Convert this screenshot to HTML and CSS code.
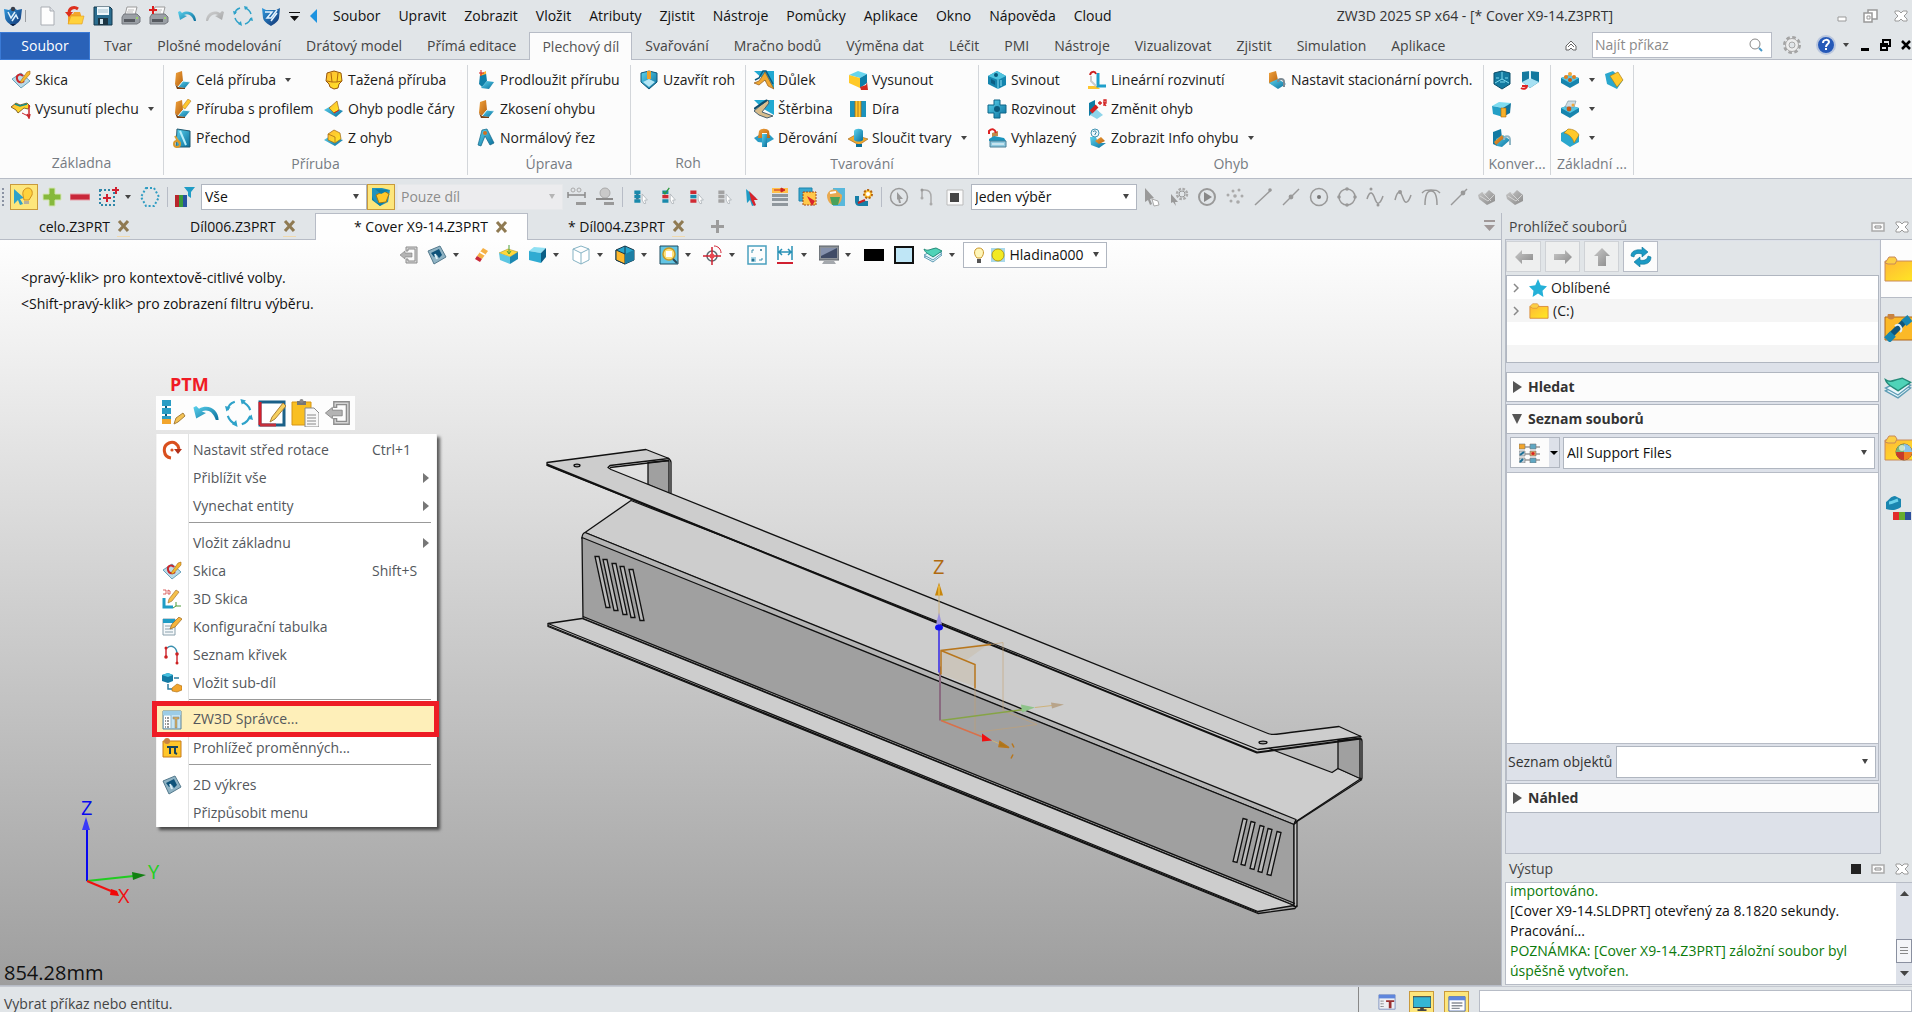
FILE: index.html
```html
<!DOCTYPE html>
<html lang="cs">
<head>
<meta charset="utf-8">
<title>ZW3D 2025 SP x64 - [* Cover X9-14.Z3PRT]</title>
<link rel="stylesheet" href="styles.css">
</head>
<body>
<svg class="sprite" aria-hidden="true">
  <defs>
    <linearGradient id="gb" x1="0" y1="0" x2="1" y2="1"><stop offset="0" stop-color="#5cd3ee"/><stop offset="1" stop-color="#0a6f9c"/></linearGradient>
    <linearGradient id="go" x1="0" y1="0" x2="1" y2="1"><stop offset="0" stop-color="#f0a23c"/><stop offset="1" stop-color="#b8620f"/></linearGradient>
    <linearGradient id="gy" x1="0" y1="0" x2="1" y2="1"><stop offset="0" stop-color="#ffb836"/><stop offset="1" stop-color="#ffea22"/></linearGradient>
    <linearGradient id="gg" x1="0" y1="0" x2="1" y2="1"><stop offset="0" stop-color="#c9c9c9"/><stop offset="1" stop-color="#8a8a8a"/></linearGradient>
    <linearGradient id="gs" x1="0" y1="0" x2="1" y2="1"><stop offset="0" stop-color="#2f9be0"/><stop offset="1" stop-color="#12306e"/></linearGradient>
  </defs>
  <symbol id="logo" viewBox="0 0 20 20"><path d="M1 3l5 1 4-3 4 3 5-1-1 8c0 4-4 7-8 9-4-2-8-5-8-9z" fill="url(#gs)"/><path d="M5 6l3 6 4-6M9 15l4-6 2 4" fill="none" stroke="#dff1fb" stroke-width="1.500"/><circle cx="10" cy="3" r="2.200" fill="#3a3f4a"/><path d="M7 18h6l-3 2z" fill="#0c1f40"/></symbol>
  <symbol id="shield" viewBox="0 0 20 20"><path d="M1 2l4 2h10l4-2-1 10c-1 4-5 6-8 8-3-2-7-4-8-8z" fill="url(#gs)"/><path d="M4 6h7l-5 6h4l6-8M10 15l6-8" fill="none" stroke="#e6f4ff" stroke-width="1.500"/></symbol>
  <symbol id="new" viewBox="0 0 20 20"><path d="M4 1h9l4 4v14H4z" fill="#fdfdfd" stroke="#a9adb3"/><path d="M13 1v4h4" fill="#dfe3e8" stroke="#a9adb3"/></symbol>
  <symbol id="open" viewBox="0 0 20 20"><path d="M3 8h5l1-2h6l1 3v9H3z" fill="#f5a62a"/><path d="M6 10h13l-2 8H3z" fill="#ffd23c" stroke="#e09a20" stroke-width=".6"/><path d="M13 3C9 0 4 2 4 7" fill="none" stroke="#dd2f1d" stroke-width="3"/><path d="M0 6h8l-4 5z" fill="#dd2f1d"/></symbol>
  <symbol id="save" viewBox="0 0 20 20"><path d="M1 1h16l2 2v16H1z" fill="#2b6d8f" stroke="#15394d"/><path d="M4 1h12v8H4z" fill="#eef7fb"/><path d="M5 4h10M5 6h10" stroke="#a3bfcc"/><path d="M5 12h10v7H5z" fill="#1b3442"/><path d="M7 13h3v5H7z" fill="#cfe3ec"/></symbol>
  <symbol id="print" viewBox="0 0 20 20"><path d="M6 1h10l-2 8H4z" fill="#fafafa" stroke="#9b9b9b"/><path d="M7 4h6M6 6h6" stroke="#bbb"/><path d="M3 8h13l3 3v5l-3 2H1v-7z" fill="#9a9fa5" stroke="#74787e"/><path d="M3 13h11v3H3z" fill="#565a60"/><circle cx="16" cy="12" r="1" fill="#9be25a"/></symbol>
  <symbol id="printp" viewBox="0 0 20 20"><use href="#print"/><path d="M4 0v8M0 4h8" stroke="#dd1b1b" stroke-width="2"/></symbol>
  <symbol id="undo" viewBox="0 0 20 20"><path d="M1 6l2 8 7-4-3-1c4-2 8 0 10 6h2C19 8 12 3 5 7L3 5z" fill="url(#gb)"/></symbol>
  <symbol id="redo" viewBox="0 0 20 20"><path d="M19 6l-2 8-7-4 3-1c-4-2-8 0-10 6H1C1 8 8 3 15 7l2-2z" fill="url(#gg)" opacity=".7"/></symbol>
  <symbol id="regen" viewBox="0 0 20 20"><path d="M2 8c0-3 2-5 5-6M12 2c3 1 5 3 6 6M18 12c-1 3-3 5-6 6M8 18c-3-1-5-3-6-6" fill="none" stroke="#2fa2c9" stroke-width="1.500"/><path d="M1 9l3-3-4-1zM11 0l1 4 3-3zM19 11l-3 3 4 1zM9 20l-1-5-3 3z" fill="#2fa2c9"/></symbol>
  <symbol id="cv" viewBox="0 0 8 8"><path d="M1 2h6L4 6z" fill="#444"/></symbol>
  <symbol id="sketch" viewBox="0 0 20 20"><path d="M1 9l9-6 9 8-9 7z" fill="#b9dbe8" stroke="#6aa3bb"/><path d="M12 6c-3-3-7-1-6 3s5 4 7 2" fill="none" stroke="#c9262b" stroke-width="2"/><path d="M9 12l7-10 3-1 0 3-8 9z" fill="#f5b82e" stroke="#a86a14" stroke-width=".6"/></symbol>
  <symbol id="sheet" viewBox="0 0 20 20"><path d="M0 8l5-4 4 2 7-2 3 3-2 3-4-1-6 5-2-3z" fill="url(#gy)" stroke="#6a4a14" stroke-width=".8"/><path d="M4 5l5 2 7-2" fill="none" stroke="#168d8a" stroke-width="1.500"/><path d="M18 6v11M16 15l2 4 1-4" stroke="#c9262b" fill="none" stroke-width="1.500"/><path d="M11 14l6 3" stroke="#c9262b"/></symbol>
  <symbol id="flange" viewBox="0 0 20 20"><path d="M4 3l6-2 1 10-5 6-3-3z" fill="url(#go)"/><path d="M11 11l7 1-5 6-7-1z" fill="url(#gb)"/><path d="M6 17l5-6 7 1" fill="none" stroke="#e8f7fb" stroke-width="1"/><path d="M3 14l3 3 7 1v1l-8 0z" fill="#774012"/></symbol>
  <symbol id="flangep" viewBox="0 0 20 20"><use href="#flange"/><path d="M10 8l6-8 3 2-6 8z" fill="#ffc830" stroke="#a86a14" stroke-width=".5"/></symbol>
  <symbol id="loft" viewBox="0 0 20 20"><path d="M5 1l13 2v16H4z" fill="url(#gb)" stroke="#21576e"/><path d="M8 3l6 14" stroke="#b8eefa" stroke-width="2"/><path d="M3 8l5 8" stroke="#d8a23c" stroke-width="2"/><circle cx="5" cy="16" r="3" fill="none" stroke="#d89a2c" stroke-width="2"/></symbol>
  <symbol id="swept" viewBox="0 0 20 20"><path d="M3 3l7-2 7 2 1 8-3 3-1 4-4 1-4-2-1-3-3-3z" fill="url(#gy)" stroke="#96560c" stroke-width="1"/><path d="M7 3l1 9h5l1-9M3 11l5 1M13 12l5-1" stroke="#b06a10" fill="none"/></symbol>
  <symbol id="bend" viewBox="0 0 20 20"><path d="M0 11l7-4 12 5-7 6z" fill="url(#gb)"/><path d="M5 9l8-7 2 9-5 3z" fill="url(#gy)" stroke="#9c6414" stroke-width=".7"/><path d="M10 14l5-3" stroke="#d62020"/></symbol>
  <symbol id="zbend" viewBox="0 0 20 20"><path d="M0 12l6-4 13 4-8 6z" fill="url(#gb)"/><path d="M4 6l6-4 6 3 1 6-6 4-7-3z" fill="url(#gy)" stroke="#9c6414" stroke-width=".7"/><path d="M4 6l7 3v5" fill="none" stroke="#9c6414" stroke-width=".7"/></symbol>
  <symbol id="extend" viewBox="0 0 20 20"><path d="M4 5l6-2 1 8-5 6-3-3z" fill="#107fa8"/><path d="M11 11l7 1-5 7-8-1z" fill="url(#gb)"/><path d="M4 4l6-3v3l-6 2z" fill="#ffb22e"/><path d="M5 0v6M3 3h5" stroke="#d32020"/></symbol>
  <symbol id="normal" viewBox="0 0 20 20"><path d="M2 17L6 2l5-1 7 14-4 2-5-9-4 10z" fill="url(#gb)" stroke="#0f6184" stroke-width=".7"/><circle cx="9" cy="5" r="2" fill="#d37022"/></symbol>
  <symbol id="corner" viewBox="0 0 20 20"><path d="M2 3l8-2 8 2v9l-8 7-8-7z" fill="url(#gb)" stroke="#0d5578"/><path d="M4 12l6-3 6 3-6 5z" fill="#b4e6f5"/><path d="M8 1h4v8H8z" fill="#f0a028"/></symbol>
  <symbol id="dimple" viewBox="0 0 20 20"><path d="M0 1h20v18z" fill="#22a9d2"/><path d="M0 13l5-2 6-9 9 17-6-3-3-6-6 5z" fill="#f0a832" stroke="#93591a" stroke-width=".7"/><path d="M1 10l4-2 4-7h3l7 13" fill="none" stroke="#0c5a80" stroke-width="1.5"/></symbol>
  <symbol id="louver" viewBox="0 0 20 20"><path d="M0 1h20v15L8 9z" fill="#22a9d2"/><path d="M0 12l7-6 7-5 1 3-7 9 11 4-6 2-8-3z" fill="#d8bd8c" stroke="#4b6270"/><path d="M0 10L13 1" stroke="#0c4c6c" stroke-width="2"/></symbol>
  <symbol id="punch" viewBox="0 0 20 20"><path d="M0 10l5-3h11l4 4-7 4-9-1z" fill="#2a9cc4"/><path d="M5 3c2-3 8-3 10 0l1 7h-3V5H8v5H4z" fill="url(#go)"/><path d="M8 6h5v13H8z" fill="url(#gb)"/></symbol>
  <symbol id="cube" viewBox="0 0 20 20"><path d="M7 2l12 1-5 5-12-2z" fill="#8fe0f3"/><path d="M2 6l12 2v10L2 15z" fill="#2fabd2"/><path d="M19 3l-5 5v10l5-6z" fill="#0b5f86"/></symbol>
  <symbol id="extrude" viewBox="0 0 20 20"><path d="M10 1l9 3-7 4-11-3z" fill="#67d5ef"/><path d="M1 5l11 3v10L1 13z" fill="#ffc928"/><path d="M19 4l-7 4v10l7-5z" fill="#0b7ea9"/><path d="M12 17l6-2 1-3 1 8h-7z" fill="#d02a20"/></symbol>
  <symbol id="hole" viewBox="0 0 20 20"><path d="M2 2h16v16H2z" fill="#1c93bd"/><path d="M7 2h6v16H7z" fill="#ffc62e"/><path d="M10 2v16M7 2v16M13 2v16" stroke="#9c681a" stroke-width=".8"/></symbol>
  <symbol id="merge" viewBox="0 0 20 20"><path d="M0 11l7-4 13 4-9 6z" fill="#f0a92e" stroke="#a0600f" stroke-width=".6"/><path d="M6 3c1-3 8-3 9 0v9c-2 2-7 2-9 0z" fill="url(#gb)"/><path d="M8 16h6v3H8z" fill="#0b6f98"/></symbol>
  <symbol id="fold" viewBox="0 0 20 20"><path d="M10 1l9 5v9l-8 4-10-5V6z" fill="#1585ae"/><path d="M10 1l9 5-8 4L1 6z" fill="#4fc3de"/><circle cx="9" cy="5" r="2" fill="#085a7d"/><path d="M11 10v9M14 10v6" stroke="#8de1f5" fill="none"/><path d="M4 9l4 2v4l-4-2z" fill="#0a5f85"/></symbol>
  <symbol id="unfold" viewBox="0 0 20 20"><path d="M7 1h6v5h6v8h-6v5H7v-5H1V6h6z" fill="url(#gb)" stroke="#0c6488"/><circle cx="10" cy="10" r="3" fill="#0a5a7d"/></symbol>
  <symbol id="flat" viewBox="0 0 20 20"><path d="M5 5l6-2v5l-6 1z" fill="#c08a4a"/><path d="M2 11l5-3 10 2 2 3H2z" fill="#1b94bd"/><path d="M3 13h16v6H3z" fill="#8fc9df" stroke="#4a7f96"/><path d="M5 16h12" stroke="#fff"/><path d="M9 5C8 1 5 0 2 3v3" stroke="#d22" fill="none" stroke-width="2"/></symbol>
  <symbol id="linear" viewBox="0 0 20 20"><path d="M1 16h9l3 3H1z" fill="#ffc62e"/><path d="M11 3v13h8" stroke="#1f9fca" fill="none" stroke-width="3"/><path d="M3 5c1-4 5-4 6-1" stroke="#c22" fill="none" stroke-width="2"/><path d="M4 6v5l5 5" stroke="#ccc" fill="none" stroke-width="2"/></symbol>
  <symbol id="chbend" viewBox="0 0 20 20"><path d="M2 4l6-3v12l-6 4z" fill="#0e7ca5"/><path d="M3 16l6-6 7 6-6 4z" fill="#8fd5ea"/><path d="M4 13l6-6" stroke="#d32020" stroke-width="4"/><path d="M11 4h4M13 2v4M17 7V1h2v3h-2l2 3" stroke="#d32020" fill="none" stroke-width="1.3"/></symbol>
  <symbol id="binfo" viewBox="0 0 20 20"><path d="M3 9l6 0 2 6 8 0-7 5-8-3z" fill="url(#gb)"/><path d="M8 13l6-4 4 4-6 3z" fill="url(#go)"/><circle cx="8" cy="5" r="4" fill="#eef8fc" stroke="#4495b4"/><path d="M6 4c1-2 4-1 3 1l-1 1v1" stroke="#2f7fa0" fill="none"/></symbol>
  <symbol id="station" viewBox="0 0 20 20"><path d="M2 3l7-2 2 9-5 5-4-2z" fill="url(#go)"/><path d="M2 13l9-4 8 5-8 5z" fill="url(#gb)"/><path d="M11 12c0-4 6-4 6 0v5" fill="none" stroke="#7c8a93" stroke-width="2"/></symbol>
  <symbol id="station2" viewBox="0 0 20 20"><path d="M1 4l8-3 1 9-5 8-4-2z" fill="#127aa3"/><path d="M4 11l7-4 7 5-8 7-5-1z" fill="url(#gb)"/><path d="M2 14l8-7 2 3-8 7z" fill="url(#go)"/><path d="M12 12c0-5 6-5 6 0v5" fill="none" stroke="#8fb5c4" stroke-width="2"/></symbol>
  <symbol id="cubeo" viewBox="0 0 20 20"><path d="M7 3l12 1-7 5L0 7z" fill="#7fdcf0"/><path d="M0 7l11 2v9L1 15z" fill="#239fc6"/><path d="M19 4l-8 5v9l7-4z" fill="#0d739c"/><path d="M9 9h5v9H9z" fill="#f8b02a" stroke="#a8690f" stroke-width=".6"/></symbol>
  <symbol id="cornerd" viewBox="0 0 20 20"><path d="M2 3l8-2 8 2v11l-8 5-8-5z" fill="#13799f" stroke="#0b4d68"/><path d="M10 2v7M3 13l7-4 7 4M4 8h3M13 8h3M8 12h5" stroke="#7fdcf0" fill="none"/></symbol>
  <symbol id="cornerr" viewBox="0 0 20 20"><path d="M2 2l8-1 9 1v10l-9 6-8-6z" fill="#13799f"/><path d="M2 12l8-4 9 4-9 6z" fill="#a6e0f2"/><path d="M10 1v8" stroke="#d8f2fa" stroke-width="2"/><path d="M1 18c3 2 6 0 6-2H2" stroke="#d22" fill="none" stroke-width="2"/></symbol>
  <symbol id="bolts" viewBox="0 0 20 20"><path d="M1 8l8-3 10 3v5l-9 5-9-5z" fill="#1785ae"/><path d="M1 8l9 5 9-5-10-3z" fill="#55c5e2"/><circle cx="6" cy="7" r="2" fill="#e1801e"/><circle cx="10" cy="4" r="2" fill="#f2a637"/><circle cx="14" cy="7" r="2" fill="#e1801e"/><circle cx="10" cy="10" r="2" fill="#c65a17"/></symbol>
  <symbol id="bolts2" viewBox="0 0 20 20"><path d="M1 9l8-3 10 3v4l-9 6-9-5z" fill="#1785ae"/><path d="M1 9l9 5 9-5-10-3z" fill="#55c5e2"/><path d="M5 8l3-6 8 0-2 6z" fill="#cfdde3" stroke="#6e8d9b" stroke-width=".6"/><circle cx="9" cy="10" r="2.4" fill="#c65a17"/><circle cx="13" cy="6" r="1.500" fill="#f2a637"/></symbol>
  <symbol id="fillet" viewBox="0 0 20 20"><path d="M1 5l8-4 10 6v7l-9 5-9-6z" fill="#2aa7cd"/><path d="M8 1c5 0 9 2 11 6l-5 8c-1-5-5-9-10-10z" fill="#ffc92b" stroke="#a8760f" stroke-width=".6"/></symbol>
  <symbol id="chamfer" viewBox="0 0 20 20"><path d="M1 4l8-3 10 9-6 9-10-5z" fill="#2aa7cd"/><path d="M6 6l8-4 5 8-6 7z" fill="#ffc92b" stroke="#a8760f" stroke-width=".6"/></symbol>
  <symbol id="bulb" viewBox="0 0 20 20"><path d="M0 2l10 9-4 1 3 5-3 1-2-5-4 4z" fill="#2fa2c9"/><path d="M10 13h5l3-5c1-4-1-7-4-7s-6 3-5 7z" fill="#ffd23c" stroke="#d09020"/><path d="M10 14h5v3h-5z" fill="#b8b09a"/></symbol>
  <symbol id="plus" viewBox="0 0 20 20"><path d="M7 1h6v6h6v6h-6v6H7v-6H1V7h6z" fill="#86b93c" stroke="#d4e6b4"/></symbol>
  <symbol id="minus" viewBox="0 0 20 20"><path d="M0 7h20v6H0z" fill="#c9283a" stroke="#e7a2aa"/></symbol>
  <symbol id="pick" viewBox="0 0 20 20"><path d="M1 3h14v15H1z" fill="none" stroke="#2f86a8" stroke-width="2" stroke-dasharray="2 2"/><path d="M8 7v8M4 11h8M17 0v7M13 3h7" stroke="#d02030" stroke-width="2"/></symbol>
  <symbol id="hexa" viewBox="0 0 20 20"><path d="M6 1h8l5 9-5 9H6L1 10z" fill="none" stroke="#2f9cc2" stroke-width="2" stroke-dasharray="2 2"/></symbol>
  <symbol id="filter" viewBox="0 0 20 20"><path d="M0 8h4v12H0z" fill="#b8252c"/><path d="M4 8h4v12H4z" fill="#3a9a3e"/><path d="M8 8h4v12H8z" fill="#2852a0"/><path d="M9 0h11l-4 5v6l-3-2V5z" fill="#1f9cc5"/></symbol>
  <symbol id="part" viewBox="0 0 20 20"><path d="M1 1h10l8 2-2 12-8 4-8-7z" fill="#1f93bd"/><path d="M5 8l8-4 5 3-3 8-7 1z" fill="#ffc92b" stroke="#a8760f"/><path d="M1 9c2 6 6 9 13 6l-5 4-8-6zM4 2l6 5 8-4" fill="#0b7fa9"/></symbol>
  <symbol id="ref" viewBox="0 0 20 20"><path d="M1 8h17M1 5v6M18 5v6" stroke="#8a8a8a" stroke-width="1.5"/><circle cx="6" cy="3" r="2" fill="none" stroke="#aaa"/><circle cx="12" cy="3" r="2" fill="none" stroke="#aaa"/><path d="M9 15h10v3H9z" fill="#999"/></symbol>
  <symbol id="ref2" viewBox="0 0 20 20"><circle cx="10" cy="6" r="5" fill="#c9c9c9" stroke="#aaa"/><path d="M1 12h17" stroke="#8a8a8a" stroke-width="2"/><path d="M9 15h10v3H9z" fill="#999"/></symbol>
  <symbol id="lc" viewBox="-2 -1 23 23"><path d="M3 3h7v4H3zM3 8h7v4H3zM3 13h7v4H3z" fill="#1989ab"/><path d="M5 7h3v1H5zM5 12h3v1H5z" fill="#0a5a7d"/><path d="M12 7l6 7-3 0 1 4-2 0-2-4z" fill="#fff" stroke="#b0b6bb"/></symbol>
  <symbol id="lcr" viewBox="-2 -1 23 23"><path d="M3 3h7v4H3zM3 13h7v4H3z" fill="#1989ab"/><path d="M3 8h7v4H3z" fill="#d02a33"/><path d="M4 4l2 3 5-7" stroke="#2c9a3d" fill="none" stroke-width="1.5"/><path d="M12 7l6 7-3 0 1 4-2 0-2-4z" fill="#fff" stroke="#b0b6bb"/></symbol>
  <symbol id="lcx" viewBox="-2 -1 23 23"><path d="M3 3h7v4H3zM3 13h7v4H3z" fill="#d02a33"/><path d="M3 8h7v4H3z" fill="#1989ab"/><path d="M12 7l6 7-3 0 1 4-2 0-2-4z" fill="#fff" stroke="#b0b6bb"/></symbol>
  <symbol id="lcg" viewBox="-2 -1 23 23"><path d="M3 3h7v4H3zM3 8h7v4H3zM3 13h7v4H3z" fill="#a2a2a2"/><path d="M12 7l6 7-3 0 1 4-2 0-2-4z" fill="#fff" stroke="#b0b6bb"/></symbol>
  <symbol id="arr" viewBox="0 0 20 20"><path d="M4 2l10 9-4 1 3 6-3 1-2-6-3 3z" fill="#1f9cc5"/><path d="M7 4l9 9-4 0 2 5-2 1-3-6z" fill="#d8232c"/></symbol>
  <symbol id="rows" viewBox="0 0 20 20"><path d="M2 1h16v5H2z" fill="#ffc04a"/><path d="M2 7h16v3H2zM2 11h16v3H2zM2 16h16v3H2z" fill="#8f979d"/><path d="M4 3h9M11 1l4 2-4 2z" stroke="#c22" fill="#c22"/></symbol>
  <symbol id="squares" viewBox="0 0 20 20"><path d="M1 1h13v13H1z" fill="#3aa8cf" stroke="#1b84ad"/><path d="M5 5h13v13H5z" fill="#ffc84a" stroke="#a84a14" stroke-dasharray="2 1"/><path d="M9 9l8 5-3 5z" fill="#d8232c"/></symbol>
  <symbol id="hand" viewBox="0 0 20 20"><path d="M7 1h12v18H7z" fill="#58b8dc"/><path d="M1 8c2-6 9-7 11-3l4 3c0 7-3 10-7 10S1 15 1 8z" fill="#e9a94f"/><path d="M4 10h10l-2 8H6z" fill="#4aa25a"/><path d="M4 6l6-1" stroke="#fff" stroke-width="2"/></symbol>
  <symbol id="gearp" viewBox="0 0 20 20"><path d="M1 9h4v5h9v5H5c-3 0-4-3-4-5z" fill="#177fa7"/><circle cx="14" cy="7" r="4" fill="#ffc53a" stroke="#b4640f" stroke-dasharray="2 1.5" stroke-width="2"/><circle cx="14" cy="7" r="2" fill="#fff"/><path d="M4 16l7-3" stroke="#c22" stroke-width="2"/></symbol>
  <symbol id="gcirc" viewBox="0 0 20 20"><circle cx="10" cy="10" r="8.5" fill="none" stroke="#999" stroke-width="1.5"/><path d="M8 5l6 7-3 0 1 4-2 0-1-4-1 1z" fill="#999"/></symbol>
  <symbol id="gcurve" viewBox="0 0 20 20"><path d="M5 3h3c4 0 6 3 6 7v7M5 3v7" fill="none" stroke="#aaa" stroke-width="1.5"/><circle cx="5" cy="3" r="1.500" fill="#999"/><circle cx="5" cy="11" r="1.500" fill="#aaa"/><circle cx="14" cy="17" r="1.500" fill="#aaa"/></symbol>
  <symbol id="gsq" viewBox="0 0 20 20"><path d="M2 3h16v15H2z" fill="#fafafa" stroke="#bbb"/><path d="M5 6h9v9H5z" fill="#444"/></symbol>
  <symbol id="garr" viewBox="0 0 20 20"><path d="M4 1l9 10-4 1 2 5-2 1-2-5-3 2z" fill="#999"/><path d="M11 12l6 2 1 4-5 1z" fill="#fff" stroke="#aaa"/></symbol>
  <symbol id="ggear" viewBox="0 0 20 20"><circle cx="13" cy="7" r="5" fill="none" stroke="#aaa" stroke-width="2.500" stroke-dasharray="2.5 1.4"/><circle cx="13" cy="7" r="3" fill="none" stroke="#999"/><path d="M2 7l7 8-3 0 1 4-3-4-2 1z" fill="#999"/></symbol>
  <symbol id="gplay" viewBox="0 0 20 20"><circle cx="10" cy="10" r="8" fill="none" stroke="#999" stroke-width="2"/><path d="M7 5l8 5-8 5z" fill="#888"/></symbol>
  <symbol id="gdots" viewBox="0 0 20 20"><g fill="#aaa"><circle cx="3" cy="8" r="1.5"/><circle cx="8" cy="4" r="1.5"/><circle cx="14" cy="3" r="1.5"/><circle cx="10" cy="9" r="1.8"/><circle cx="17" cy="9" r="1.5"/><circle cx="6" cy="14" r="1.5"/><circle cx="13" cy="15" r="1.8"/></g></symbol>
  <symbol id="gline" viewBox="0 0 20 20"><path d="M2 18L18 3" stroke="#999" stroke-width="1.5"/><circle cx="17" cy="3" r="1.8" fill="#999"/></symbol>
  <symbol id="gnear" viewBox="0 0 20 20"><path d="M2 18L18 2" stroke="#999" stroke-width="1.5"/><circle cx="14" cy="6" r="2.400" fill="#999"/></symbol>
  <symbol id="gmid" viewBox="0 0 20 20"><path d="M2 18L18 2" stroke="#999" stroke-width="1.5"/><circle cx="10" cy="10" r="2.4" fill="#999"/></symbol>
  <symbol id="gcen" viewBox="0 0 20 20"><circle cx="10" cy="10" r="8.5" fill="none" stroke="#999" stroke-width="1.5"/><circle cx="10" cy="10" r="2" fill="#777"/></symbol>
  <symbol id="gquad" viewBox="0 0 20 20"><circle cx="10" cy="10" r="8" fill="none" stroke="#999" stroke-width="1.5"/><g fill="#999"><circle cx="10" cy="2" r="1.8"/><circle cx="10" cy="18" r="1.8"/><circle cx="2" cy="10" r="1.8"/><circle cx="18" cy="10" r="1.8"/></g></symbol>
  <symbol id="gspl" viewBox="0 0 20 20"><path d="M2 12c3-10 6-6 8 0s5 6 8-3" fill="none" stroke="#999" stroke-width="1.5"/><circle cx="6" cy="2" r="1.5" fill="#999"/><circle cx="13" cy="18" r="1.5" fill="#999"/></symbol>
  <symbol id="gspl2" viewBox="0 0 20 20"><path d="M2 13c3-12 6-8 8-2s5 6 8-3" fill="none" stroke="#999" stroke-width="1.5"/><circle cx="7" cy="5" r="2" fill="#999"/></symbol>
  <symbol id="gtan" viewBox="0 0 20 20"><path d="M1 6c3-3 4-3 9-3s6 0 9 3M4 18C4 10 6 4 10 4s6 6 6 14" fill="none" stroke="#999" stroke-width="1.5"/></symbol>
  <symbol id="gcloud" viewBox="0 0 20 20"><path d="M1 8l4-3 3 2 4-4 6 5 0 6-8 4-8-6z" fill="url(#gg)"/><path d="M3 9l8 5 6-6M6 6l8 8" stroke="#ddd" stroke-width=".8" fill="none"/></symbol>
  <symbol id="exit" viewBox="0 0 20 20"><path d="M7 6V2h11v16H7v-4h2v2h7V4H9v2z" fill="#d4d4d4" stroke="#8d8d8d"/><path d="M1 10l5-4v2h7v4H6v2z" fill="#b4b4b4" stroke="#808080" stroke-width=".6"/></symbol>
  <symbol id="draw2d" viewBox="0 0 20 20"><path d="M1 6l12-5 6 11-12 7z" fill="#8fb3c4" stroke="#557a8d"/><path d="M4 8l8-4 3 6-3 3-2-3-3 2z" fill="#0e5279"/><path d="M8 9l2 5" stroke="#d8edf5" stroke-width="2"/></symbol>
  <symbol id="eraser" viewBox="0 0 20 20"><path d="M12 3l5 3-6 8-5-3z" fill="#f5b045"/><path d="M6 11l5 3-2 3-5-3z" fill="#c9293a"/><path d="M9 7l5 3" stroke="#fff" stroke-width="1.5"/></symbol>
  <symbol id="cubey" viewBox="0 0 20 20"><path d="M9 4l10 3-8 5L0 8z" fill="#ffd83c" stroke="#9a8a1c" stroke-width=".5"/><path d="M0 8l11 4v7L1 15z" fill="#5cc6e2"/><path d="M19 7l-8 5v7l8-5z" fill="#1c88b1"/><path d="M10 0v8M8 6l2 3 2-3" stroke="#4aa03a" fill="none"/></symbol>
  <symbol id="cubew" viewBox="0 0 20 20"><path d="M10 1l8 3v11l-8 4-8-4V4zM2 4l8 4 8-4M10 8v11" fill="#fff" stroke="#85b3c4"/></symbol>
  <symbol id="cubec" viewBox="0 0 20 20"><path d="M10 1l9 4v10l-9 4-9-4V5z" fill="#27a5cc" stroke="#17384a"/><path d="M1 5l9 4v10l-9-4z" fill="#ffb82b" stroke="#17384a"/><path d="M10 9l9-4v10l-9 4z" fill="#1d7ea3"/><path d="M10 9V1" stroke="#17384a"/></symbol>
  <symbol id="pagez" viewBox="0 0 20 20"><path d="M1 1h18v18H1z" fill="#63c5e4" stroke="#1d4a5f"/><circle cx="10" cy="9" r="6" fill="#ffe27a" stroke="#c79a26" stroke-width="1.5"/><path d="M7 6h6v6H7z" fill="#fff"/><path d="M14 14l4 4" stroke="#2a4c5c" stroke-width="2"/></symbol>
  <symbol id="target" viewBox="0 0 20 20"><circle cx="9" cy="11" r="5" fill="none" stroke="#5a6a70" stroke-width="1.5"/><path d="M9 2v18M0 11h18" stroke="#d02030" stroke-width="1.5"/><circle cx="9" cy="11" r="2.500" fill="#e8474f"/><path d="M11 1c4 0 7 3 7 7" stroke="#d02030" fill="none"/></symbol>
  <symbol id="extents" viewBox="0 0 20 20"><path d="M1 1h18v18H1z" fill="#fdfdfd" stroke="#4aa0be" stroke-width="1.5"/><path d="M4 12h5v5H4z" fill="#a8d6e6"/><path d="M12 15h3v-2M5 8V5h2" stroke="#3b8fad" fill="none"/><circle cx="6" cy="15" r="1.5" fill="#2c7391"/><circle cx="14" cy="5" r="1" fill="#2c7391"/></symbol>
  <symbol id="dimw" viewBox="0 0 20 20"><path d="M3 1v14M17 1v14M4 7h12M7 4L4 7l3 3M13 4l3 3-3 3" stroke="#2790b5" fill="none" stroke-width="1.5"/><path d="M2 18h16" stroke="#d02030" stroke-width="2"/></symbol>
  <symbol id="monitor" viewBox="0 0 20 20"><path d="M0 1h20v14H0z" fill="#8d9298" stroke="#5b6066"/><path d="M2 3h16v10H2z" fill="#3f4b66"/><path d="M2 3h16L2 11z" fill="#8591ac"/><path d="M5 16h10l2 3H3z" fill="#a4a8ad"/></symbol>
  <symbol id="layers" viewBox="0 0 20 20"><path d="M1 12l9 5 9-7-8-3z" fill="#eaf6fb" stroke="#5f9db5"/><path d="M1 10l9 5 9-7-8-3z" fill="#eaf6fb" stroke="#5f9db5"/><path d="M1 4c3 2 5 1 8 0l4-1 6 3-9 6C6 9 2 8 1 4z" fill="#4fd3b8" stroke="#248a78"/></symbol>
  <symbol id="lamp" viewBox="0 0 14 18"><path d="M5 12C1 8 2 2 7 2s6 6 2 10z" fill="#fff6b8" stroke="#c8962a"/><path d="M5 13h4v4H5z" fill="#555"/></symbol>
  <symbol id="sun" viewBox="0 0 14 18"><path d="M0 2h14v14H0z" fill="#a9d8ea"/><circle cx="7" cy="9" r="6" fill="#f2ea22" stroke="#b59a18"/></symbol>
  <symbol id="tree" viewBox="0 0 28 28"><path d="M3 1h9v6H3zM3 9h9v6H3zM3 17h9v3H3z" fill="#2a9cc4"/><path d="M3 20h9v5H3z" fill="#f2a52c"/><path d="M7 7v2M7 15v2" stroke="#0b5a7d" stroke-width="2"/><path d="M15 25l2-6 7-5 2 3-7 6z" fill="#f3c254" stroke="#a8803a"/></symbol>
  <symbol id="sketchr" viewBox="0 0 28 28"><path d="M2 3h24v23H2z" fill="#fff" stroke="#1b6088" stroke-width="3"/><path d="M2 26V3" stroke="#d4202c" stroke-width="3"/><path d="M2 26h16" stroke="#c4303c" stroke-width="3"/><path d="M12 23l2-5L25 4l3 3-11 13z" fill="#f6cf5e" stroke="#a9803a"/></symbol>
  <symbol id="paste" viewBox="0 0 28 28"><path d="M1 3h19v23H1z" fill="#f9bf22" stroke="#d69515"/><path d="M6 2h9v4H6z" fill="#777"/><circle cx="10.500" cy="2" r="2" fill="#888"/><path d="M14 9h9l5 5v14H14z" fill="#f8f8f8" stroke="#8a8a8a"/><path d="M16 16h9M16 19h9M16 22h9M16 25h9" stroke="#888"/></symbol>
  <symbol id="rot" viewBox="0 0 20 20"><path d="M9 18C1 17 0 6 7 3c5-2 9 1 10 6" fill="none" stroke="#d9501e" stroke-width="3"/><path d="M12 9h8l-4 5z" fill="#b3301a"/><circle cx="10" cy="10" r="1.600" fill="#d9501e"/></symbol>
  <symbol id="sk3d" viewBox="0 0 20 20"><path d="M2 9v9h9" fill="none" stroke="#1f9cc5" stroke-width="3"/><path d="M6 14l1-4 7-9 3 2-7 9z" fill="#f5c04a" stroke="#a8763a" stroke-width=".7"/><path d="M14 17h5M14 17v-4M14 17l-3 2" stroke="#4a9a3a"/><path d="M1 1h3v4H1M6 1v4h2V2z" stroke="#d04040" fill="none" stroke-width=".8"/></symbol>
  <symbol id="conf" viewBox="0 0 20 20"><path d="M1 2h12v16H1z" fill="#f4f8fa" stroke="#8aa0ac"/><path d="M1 2h12v4H1z" fill="#1f9cc5"/><path d="M3 9h8M3 12h8M3 15h8" stroke="#8aa0ac"/><path d="M8 12l2-5 7-7 3 2-7 8z" fill="#f5b43c" stroke="#9a651c" stroke-width=".7"/></symbol>
  <symbol id="curves" viewBox="0 0 20 20"><path d="M5 3c5-4 10 0 10 6" fill="none" stroke="#3a8fae" stroke-width="1.500"/><path d="M4 3v9M15 9v9" stroke="#d03038" stroke-width="1.500"/><circle cx="4" cy="12" r="1.800" fill="#c22"/><circle cx="15" cy="9" r="1.800" fill="#c22"/><circle cx="15" cy="18" r="1.500" fill="#c22"/><circle cx="4" cy="3" r="1.500" fill="#c22"/></symbol>
  <symbol id="subp" viewBox="0 0 20 20"><path d="M0 2l6-2 5 2v6l-5 2-6-2z" fill="#137aa3"/><path d="M0 2l6 2 5-2-5-2z" fill="#45bfdf"/><path d="M12 5h5M6 11v5h4" stroke="#2e7ea0" fill="none" stroke-width="1.500"/><path d="M10 15l5-4 5 2v4l-5 2-5-1z" fill="#f2a52c" stroke="#a8690f" stroke-width=".6"/></symbol>
  <symbol id="mgr" viewBox="0 0 20 20"><path d="M1 1h18v18H1z" fill="#c4e4f4" stroke="#5d8299"/><path d="M1 1h18v4H1z" fill="#9ccce6"/><path d="M2 6h7v12H2z" fill="#fff"/><path d="M3 8h4M3 11h4M3 14h4M3 17h4" stroke="#333" stroke-dasharray="1 1 2 0"/><path d="M9 5v14" stroke="#8fb5c9"/><path d="M11 7h6v2h-2v9h-2V9h-2z" fill="#d2a95c" stroke="#87867c" stroke-width=".5"/></symbol>
  <symbol id="pi" viewBox="0 0 20 20"><path d="M1 3h18v16H1z" fill="#ffc629" stroke="#c77d1c"/><circle cx="5" cy="3" r="3" fill="#c98340"/><path d="M5 9h11M8 9v7M13 9v6l2 1" stroke="#17455c" fill="none" stroke-width="2"/></symbol>
  <symbol id="bk" viewBox="0 0 20 20"><path d="M1 10l7-7v4h11v6H8v4z" fill="url(#gg)"/></symbol>
  <symbol id="fw" viewBox="0 0 20 20"><path d="M19 10l-7-7v4H1v6h11v4z" fill="url(#gg)"/></symbol>
  <symbol id="up" viewBox="0 0 20 20"><path d="M10 1l8 8h-4v10H6V9H2z" fill="url(#gg)"/></symbol>
  <symbol id="sync" viewBox="0 0 22 20"><path d="M1 9c0-5 5-7 11-6V0l6 5-6 5V7C8 6 5 6 4 10zM21 10c0 6-5 8-11 7v3l-6-5 6-5v3c4 1 7 0 8-4z" fill="#1c9ac4" stroke="#0c7499" stroke-width=".6"/></symbol>
  <symbol id="star" viewBox="0 0 20 20"><path d="M10 0l3 7 7 1-5 5 1 7-6-4-6 4 1-7-5-5 7-1z" fill="#25b1d8"/></symbol>
  <symbol id="folder" viewBox="0 0 22 20"><path d="M1 5h20v13H1z" fill="url(#gy)" stroke="#d88c3c"/><path d="M1 5l3-3h5l2 2-2 3H4z" fill="#fbcf46" stroke="#d88c3c" stroke-width=".7"/></symbol>
  <symbol id="grid" viewBox="0 0 22 20"><path d="M6 4h15M6 11h15M6 17h15" stroke="#999" stroke-width="1.500"/><path d="M0 1h6v5H0z" fill="#f2a52c" stroke="#777" stroke-width=".6"/><path d="M0 8h6v5H0zM0 15h6v5H0z" fill="#c4d0d8" stroke="#777" stroke-width=".6"/><path d="M1 12l4-3M1 19l3-3" stroke="#1b6f96" stroke-width="2"/><path d="M11 1h6v5h-6zM11 15h6v5h-6z" fill="#5fa7c3" stroke="#777" stroke-width=".6"/><path d="M11 8h6v5h-6z" fill="#e0a060" stroke="#777" stroke-width=".6"/><circle cx="14" cy="10.500" r="1.600" fill="#d22"/></symbol>
  <symbol id="sfold" viewBox="0 0 28 28"><path d="M1 6h34v20H1z" fill="url(#gy)" stroke="#c98a5a"/><path d="M1 8l4-6h6l2 3-2 4H4z" fill="#fbcf46" stroke="#c98a5a"/></symbol>
  <symbol id="sbolt" viewBox="0 0 28 28"><path d="M1 3h34v23H1z" fill="#fbb927" stroke="#b0661c"/><circle cx="7" cy="2" r="3.500" fill="#c98340"/><path d="M6 22L20 8" stroke="#0f557a" stroke-width="6"/><path d="M3 26l6-6" stroke="#1786b0" stroke-width="8"/><path d="M20 9l6-5" stroke="#1786b0" stroke-width="8"/><path d="M11 12c4-4 9 3 5 6" stroke="#dff1fa" fill="none" stroke-width="2"/></symbol>
  <symbol id="scol" viewBox="0 0 28 28"><path d="M2 8c3-2 5-6 9-6l6 3v8c-4 3-9 4-15 2z" fill="#1a86b0"/><path d="M5 9c3 0 6-2 9-3" stroke="#6bd1ea" stroke-width="3" fill="none"/><path d="M9 18h6v8H9z" fill="#e22b2b"/><path d="M15 18h6v8h-6z" fill="#68ac2e"/><path d="M21 18h6v8h-6z" fill="#2c4f9c"/></symbol>
  <symbol id="sball" viewBox="0 0 28 28"><use href="#sfold"/><circle cx="20" cy="18" r="8" fill="#f4f8fa" stroke="#7a5a3a"/><path d="M12 18a8 8 0 0 1 8-8v8z" fill="#7ab87a"/><path d="M20 26a8 8 0 0 0 8-8h-8z" fill="#f08020"/><path d="M12 18a8 8 0 0 0 8 8v-8z" fill="#c83a2a"/><path d="M20 10a8 8 0 0 1 8 8h-8z" fill="#8cc4e8"/><circle cx="18" cy="14" r="3" fill="#fff" opacity=".6"/></symbol>
  <symbol id="winm" viewBox="0 0 20 20"><path d="M1 3h18v16H1z" fill="#fff" stroke="#3d5fb0"/><path d="M1 3h18v4H1z" fill="#5f86dc"/><path d="M4 10h12M4 13h12M4 16h9" stroke="#8a8f96" stroke-width="1.500"/></symbol>
  <symbol id="wint" viewBox="0 0 20 20"><path d="M1 2h18v16H1z" fill="#eef0f4" stroke="#7a8fc0"/><path d="M1 2h18v4H1z" fill="#5f86dc"/><path d="M3 9h3M3 12h3M3 15h3" stroke="#333" stroke-dasharray="1 1"/><path d="M9 8h9v2h-3v7h-3v-7H9z" fill="#9a3030"/></symbol>
  <symbol id="disp" viewBox="0 0 20 20"><path d="M0 3h20v12H0z" fill="#35b6d4" stroke="#333"/><path d="M8 15h4v2h3v2H5v-2h3z" fill="#444"/></symbol>
  <symbol id="xw" viewBox="0 0 14 12"><path d="M1 1h4l2 2 2-2h4v2L10 6l3 3v2H9L7 9l-2 2H1V9l3-3-3-3z" fill="#fff" stroke="#9a9a9a"/></symbol>
  <symbol id="pin" viewBox="0 0 14 12"><path d="M1 2h12v8H1z" fill="#fafafa" stroke="#aaa" stroke-width="1.500"/><path d="M4 5h6v2H4z" fill="#fff" stroke="#888"/></symbol>
  <symbol id="gear" viewBox="0 0 20 20"><circle cx="10" cy="10" r="7.500" fill="#f4f4f4" stroke="#a4a4a4" stroke-width="3" stroke-dasharray="3.500 2.390"/><circle cx="10" cy="10" r="6.500" fill="#ededed" stroke="#a8a8a8"/><circle cx="10" cy="10" r="3" fill="#e1e5e8" stroke="#a8a8a8"/></symbol>
</svg>

<header class="titlebar">
  <svg class="i20 logo"><use href="#logo"/></svg>
  <div class="quick">
    <button aria-label="Nový"><svg class="i20"><use href="#new"/></svg></button>
    <button aria-label="Otevřít"><svg class="i20"><use href="#open"/></svg></button>
    <button aria-label="Uložit"><svg class="i20"><use href="#save"/></svg></button>
    <button aria-label="Tisk"><svg class="i20"><use href="#print"/></svg></button>
    <button aria-label="Rychlý tisk"><svg class="i20"><use href="#printp"/></svg></button>
    <button aria-label="Zpět"><svg class="i20"><use href="#undo"/></svg></button>
    <button aria-label="Znovu"><svg class="i20"><use href="#redo"/></svg></button>
    <button aria-label="Regenerovat"><svg class="i20"><use href="#regen"/></svg></button>
    <button aria-label="ZW3D"><svg class="i20"><use href="#shield"/></svg></button>
    <button aria-label="Přizpůsobit panel" class="narrow"><svg width="11" height="9" viewBox="0 0 11 9"><path d="M0 0h11v1H0zM1 4h9L5.500 9z" fill="#111"/></svg></button>
    <button aria-label="Skrýt menu" class="narrow"><svg width="7" height="14" viewBox="0 0 7 14"><path d="M7 0v14L0 7z" fill="#1d93e0"/></svg></button>
  </div>
  <nav class="mainmenu">
    <a href="#">Soubor</a><a href="#">Upravit</a><a href="#">Zobrazit</a><a href="#">Vložit</a><a href="#">Atributy</a><a href="#">Zjistit</a><a href="#">Nástroje</a><a href="#">Pomůcky</a><a href="#">Aplikace</a><a href="#">Okno</a><a href="#">Nápověda</a><a href="#">Cloud</a>
  </nav>
  <div class="apptitle">ZW3D 2025 SP x64 - [* Cover X9-14.Z3PRT]</div>
  <div class="winbtns">
    <button aria-label="Minimalizovat"><svg width="10" height="12" viewBox="0 0 10 12"><path d="M1 7h8v4H1z" fill="#fff" stroke="#999"/></svg></button>
    <button aria-label="Obnovit"><svg width="15" height="14" viewBox="0 0 15 14"><path d="M5 1h9v9H5z" fill="#fff" stroke="#999" stroke-width="1.500"/><path d="M1 4h8v9H1z" fill="#fff" stroke="#999" stroke-width="1.500"/><path d="M4 7h3v3H4z" fill="#fff" stroke="#999"/></svg></button>
    <button aria-label="Zavřít"><svg width="14" height="12"><use href="#xw"/></svg></button>
  </div>
</header>

<div class="tabs">
  <button class="tab file">Soubor</button>
  <button class="tab">Tvar</button><button class="tab">Plošné modelování</button><button class="tab">Drátový model</button><button class="tab">Přímá editace</button><button class="tab active">Plechový díl</button><button class="tab">Svařování</button><button class="tab">Mračno bodů</button><button class="tab">Výměna dat</button><button class="tab">Léčit</button><button class="tab">PMI</button><button class="tab">Nástroje</button><button class="tab">Vizualizovat</button><button class="tab">Zjistit</button><button class="tab">Simulation</button><button class="tab">Aplikace</button>
  <div class="tabtools">
    <button class="fold" aria-label="Sbalit pás karet"><svg width="12" height="11" viewBox="0 0 12 11"><path d="M1 6l5-5 5 5v4H8L6 8l-2 2H1z" fill="#fff" stroke="#666"/><path d="M3 7l3-3 3 3" fill="none" stroke="#666"/></svg></button>
    <label class="search"><input type="text" placeholder="Najít příkaz" aria-label="Najít příkaz"><svg width="14" height="14" viewBox="0 0 14 14"><circle cx="6" cy="6" r="5" fill="none" stroke="#888"/><path d="M10 10l3 3" stroke="#4a9ac9" stroke-width="2"/></svg></label>
    <button class="opts" aria-label="Nastavení"><svg class="i20"><use href="#gear"/></svg></button>
    <button aria-label="Nápověda"><svg class="i20" viewBox="0 0 20 20"><circle cx="10" cy="10" r="9" fill="#2659b8" stroke="#b9c6de" stroke-width="2"/><path d="M7 8c0-4 6-4 6-1 0 2-3 2-3 5M10 13v2" fill="none" stroke="#fff" stroke-width="2"/></svg><svg class="cv"><use href="#cv"/></svg></button>
    <button aria-label="Minimalizovat dokument"><svg width="10" height="12" viewBox="0 0 10 12"><path d="M1 9h8v3H1z"/></svg></button>
    <button aria-label="Obnovit dokument"><svg width="11" height="12" viewBox="0 0 11 12"><path d="M3 1h7v6H3zM1 5h6v6H1z" fill="#e1e5e8" stroke="#000" stroke-width="2"/></svg></button>
    <button aria-label="Zavřít dokument"><svg width="10" height="10" viewBox="0 0 10 10"><path d="M1 1l8 8M9 1L1 9" stroke="#000" stroke-width="2.500"/></svg></button>
  </div>
</div>

<div class="ribbon">
  <section class="group g1"><div class="cols">
    <div class="col"><button><svg class="i20"><use href="#sketch"/></svg>Skica</button><button><svg class="i20"><use href="#sheet"/></svg>Vysunutí plechu<svg class="cv"><use href="#cv"/></svg></button></div></div><h3>Základna</h3></section>
  <section class="group g2"><div class="cols">
    <div class="col c152"><button><svg class="i20"><use href="#flange"/></svg>Celá příruba<svg class="cv"><use href="#cv"/></svg></button><button><svg class="i20"><use href="#flangep"/></svg>Příruba s profilem</button><button><svg class="i20"><use href="#loft"/></svg>Přechod</button></div>
    <div class="col"><button><svg class="i20"><use href="#swept"/></svg>Tažená příruba</button><button><svg class="i20"><use href="#bend"/></svg>Ohyb podle čáry</button><button><svg class="i20"><use href="#zbend"/></svg>Z ohyb</button></div></div><h3>Příruba</h3></section>
  <section class="group g3"><div class="cols">
    <div class="col"><button><svg class="i20"><use href="#extend"/></svg>Prodloužit přírubu</button><button><svg class="i20"><use href="#flange"/></svg>Zkosení ohybu</button><button><svg class="i20"><use href="#normal"/></svg>Normálový řez</button></div></div><h3>Úprava</h3></section>
  <section class="group g4"><div class="cols">
    <div class="col"><button><svg class="i20"><use href="#corner"/></svg>Uzavřít roh</button></div></div><h3>Roh</h3></section>
  <section class="group g5"><div class="cols">
    <div class="col c94"><button><svg class="i20"><use href="#dimple"/></svg>Důlek</button><button><svg class="i20"><use href="#louver"/></svg>Štěrbina</button><button><svg class="i20"><use href="#punch"/></svg>Děrování</button></div>
    <div class="col"><button><svg class="i20"><use href="#extrude"/></svg>Vysunout</button><button><svg class="i20"><use href="#hole"/></svg>Díra</button><button><svg class="i20"><use href="#merge"/></svg>Sloučit tvary<svg class="cv"><use href="#cv"/></svg></button></div></div><h3>Tvarování</h3></section>
  <section class="group g6"><div class="cols">
    <div class="col c100"><button><svg class="i20"><use href="#fold"/></svg>Svinout</button><button><svg class="i20"><use href="#unfold"/></svg>Rozvinout</button><button><svg class="i20"><use href="#flat"/></svg>Vyhlazený</button></div>
    <div class="col c180"><button><svg class="i20"><use href="#linear"/></svg>Lineární rozvinutí</button><button><svg class="i20"><use href="#chbend"/></svg>Změnit ohyb</button><button><svg class="i20"><use href="#binfo"/></svg>Zobrazit Info ohybu<svg class="cv"><use href="#cv"/></svg></button></div>
    <div class="col"><button><svg class="i20"><use href="#station"/></svg>Nastavit stacionární povrch.</button></div></div><h3>Ohyb</h3></section>
  <section class="group g7"><div class="cols">
    <div class="col c28"><button aria-label="Konverze rohu"><svg class="i20"><use href="#cornerd"/></svg></button><button aria-label="Konverze dílu"><svg class="i20"><use href="#cubeo"/></svg></button><button aria-label="Stacionární"><svg class="i20"><use href="#station2"/></svg></button></div>
    <div class="col"><button aria-label="Obnovit roh"><svg class="i20"><use href="#cornerr"/></svg></button></div></div><h3>Konver...</h3></section>
  <section class="group g8"><div class="cols">
    <div class="col c44"><button aria-label="Díry"><svg class="i20"><use href="#bolts"/></svg><svg class="cv"><use href="#cv"/></svg></button><button aria-label="Závity"><svg class="i20"><use href="#bolts2"/></svg><svg class="cv"><use href="#cv"/></svg></button><button aria-label="Zaoblení"><svg class="i20"><use href="#fillet"/></svg><svg class="cv"><use href="#cv"/></svg></button></div>
    <div class="col"><button aria-label="Zkosení"><svg class="i20"><use href="#chamfer"/></svg></button></div></div><h3>Základní ...</h3></section>
</div>

<div class="toolbar">
  <i class="grip"></i>
  <button class="on" aria-label="Rychlý výběr"><svg class="i20"><use href="#bulb"/></svg></button>
  <button aria-label="Přidat"><svg class="i20"><use href="#plus"/></svg></button>
  <button aria-label="Odebrat"><svg class="i20"><use href="#minus"/></svg></button>
  <button class="dd" aria-label="Výběr oknem"><svg class="i20"><use href="#pick"/></svg><svg class="cv"><use href="#cv"/></svg></button>
  <button aria-label="Polygon"><svg class="i20"><use href="#hexa"/></svg></button>
  <i class="sep"></i>
  <button aria-label="Filtr"><svg class="i20"><use href="#filter"/></svg></button>
  <span class="combo"><select aria-label="Filtr výběru"><option>Vše</option></select></span>
  <button class="on" aria-label="Díl"><svg class="i20"><use href="#part"/></svg></button>
  <span class="combo off"><select aria-label="Rozsah" disabled><option>Pouze díl</option></select></span>
  <button aria-label="Reference"><svg class="i20"><use href="#ref"/></svg></button>
  <button aria-label="Reference času"><svg class="i20"><use href="#ref2"/></svg></button>
  <i class="sep"></i>
  <button aria-label="Seznam 1"><svg class="i20"><use href="#lc"/></svg></button>
  <button aria-label="Seznam 2"><svg class="i20"><use href="#lcr"/></svg></button>
  <button aria-label="Seznam 3"><svg class="i20"><use href="#lcx"/></svg></button>
  <button aria-label="Seznam 4"><svg class="i20"><use href="#lcg"/></svg></button>
  <button aria-label="Kurzor"><svg class="i20"><use href="#arr"/></svg></button>
  <button aria-label="Řádky"><svg class="i20"><use href="#rows"/></svg></button>
  <button aria-label="Oblasti"><svg class="i20"><use href="#squares"/></svg></button>
  <button aria-label="Podržet"><svg class="i20"><use href="#hand"/></svg></button>
  <button aria-label="Prvek"><svg class="i20"><use href="#gearp"/></svg></button>
  <i class="sep"></i>
  <button aria-label="Výběr"><svg class="i20"><use href="#gcirc"/></svg></button>
  <button aria-label="Řetězec"><svg class="i20"><use href="#gcurve"/></svg></button>
  <button aria-label="Plocha"><svg class="i20"><use href="#gsq"/></svg></button>
  <span class="combo"><select aria-label="Způsob výběru"><option>Jeden výběr</option></select></span>
  <button aria-label="Výběr prvku"><svg class="i20"><use href="#garr"/></svg></button>
  <button aria-label="Nastavení výběru"><svg class="i20"><use href="#ggear"/></svg></button>
  <button aria-label="Spustit"><svg class="i20"><use href="#gplay"/></svg></button>
  <button aria-label="Body"><svg class="i20"><use href="#gdots"/></svg></button>
  <button aria-label="Koncový bod"><svg class="i20"><use href="#gline"/></svg></button>
  <button aria-label="Střed úsečky"><svg class="i20"><use href="#gmid"/></svg></button>
  <button aria-label="Střed"><svg class="i20"><use href="#gcen"/></svg></button>
  <button aria-label="Kvadrant"><svg class="i20"><use href="#gquad"/></svg></button>
  <button aria-label="Křivka"><svg class="i20"><use href="#gspl"/></svg></button>
  <button aria-label="Bod na křivce"><svg class="i20"><use href="#gspl2"/></svg></button>
  <button aria-label="Tečna"><svg class="i20"><use href="#gtan"/></svg></button>
  <button aria-label="Blízko"><svg class="i20"><use href="#gnear"/></svg></button>
  <button aria-label="Plocha 1"><svg class="i20"><use href="#gcloud"/></svg></button>
  <button aria-label="Plocha 2"><svg class="i20"><use href="#gcloud"/></svg></button>
</div>

<div class="work">
  <main class="docs">
    <div class="doctabs">
      <div class="doctab t1"><a href="#">celo.Z3PRT</a><button class="dx" aria-label="Zavřít celo"><svg width="13" height="12" viewBox="0 0 13 12"><path d="M2 1l9 10M11 1L2 11" stroke="#8f7a52" stroke-width="3"/></svg></button></div>
      <div class="doctab t2"><a href="#">Díl006.Z3PRT</a><button class="dx" aria-label="Zavřít Díl006"><svg width="13" height="12" viewBox="0 0 13 12"><path d="M2 1l9 10M11 1L2 11" stroke="#8f7a52" stroke-width="3"/></svg></button></div>
      <div class="doctab t3 active"><a href="#">* Cover X9-14.Z3PRT</a><button class="dx" aria-label="Zavřít Cover"><svg width="13" height="12" viewBox="0 0 13 12"><path d="M2 1l9 10M11 1L2 11" stroke="#8f7a52" stroke-width="3"/></svg></button></div>
      <div class="doctab t4"><a href="#">* Díl004.Z3PRT</a><button class="dx" aria-label="Zavřít Díl004"><svg width="13" height="12" viewBox="0 0 13 12"><path d="M2 1l9 10M11 1L2 11" stroke="#8f7a52" stroke-width="3"/></svg></button></div>
      <button class="add" aria-label="Nový dokument"><svg width="13" height="13" viewBox="0 0 13 13"><path d="M5 0h3v5h5v3H8v5H5V8H0V5h5z" fill="#9c9c9c"/></svg></button>
      <button class="list" aria-label="Seznam dokumentů"><svg width="11" height="11" viewBox="0 0 11 11"><path d="M0 0h11v2H0zM0 5h11l-5.500 6z" fill="#a09898"/></svg></button>
    </div>
    <div class="viewport">
      <svg class="model" viewBox="0 240 1501 744" role="img" aria-label="Model Cover X9-14">
        <g stroke="#111" stroke-width="1.300" stroke-linejoin="round">
          <path d="M648 462l21-2v33l-21-9z" fill="#a0a0a0"/>
          <path d="M668 458q3 1 3 4v31" fill="none"/>
          <path d="M585 532L631 500l646 251 55 21 6-4 23 10-65 43z" fill="#cdcdcd"/>
          <path d="M585 532q-3 1-3 6L1294 824q1-3 2-5z" fill="#b4b4b4"/>
          <path d="M582 537L1294 824V905L583 618z" fill="#a0a0a0"/>
          <path d="M1294 824l3-3V906l-3 0z" fill="#c4c4c4"/>
          <path d="M1297 821l65-42" fill="none"/>
          <path d="M548 623l34-5L1294 905l-36 6z" fill="#cdcdcd"/>
          <path d="M583 616L1295 903" fill="none"/>
          <path d="M548 623v3L1258 913l37-5 2-3" fill="none"/>
          <path d="M548 625L1258 912" fill="none"/>
          <path d="M1338 740l22-2v40l-22-10z" fill="#a0a0a0"/>
          <path d="M1360 738q2 0 2 3v36q0 2-2 2" fill="none"/>
          <path d="M547 462l99-13 23 9-59 7-2 2 3 2 657 264q4 2 22-1l49-6 22 10-103 13L547 465z" fill="#cdcdcd"/>
          <path d="M610 467l59-7" fill="none"/>
          <path d="M547 464L1257 752l104-14" fill="none" stroke-width="2"/>
          <ellipse cx="577" cy="465" rx="3" ry="1.300" fill="#aaa"/><ellipse cx="1263" cy="742" rx="4" ry="1.300" fill="#aaa"/>
        </g>
        <g fill="#b9b9b9" stroke="#111" stroke-width="1.300">
          <path id="sl" d="M595 556h4l11 51h-4z"/><use href="#sl" x="8" y="3"/><use href="#sl" x="17" y="7"/><use href="#sl" x="25" y="10"/><use href="#sl" x="34" y="13"/>
          <path id="sr" d="M1243 818l4 1-10 43-4-1z"/><use href="#sr" x="8" y="3"/><use href="#sr" x="17" y="7"/><use href="#sr" x="25" y="10"/><use href="#sr" x="34" y="13"/>
        </g>
        <g fill="none">
          <path d="M941 650l50-8-35 25-15 5zM941 650l34 14v22l-34-12z" fill="#c8b8a0" opacity=".4"/>
          <path d="M940 720v-54" stroke="#8a6a80" stroke-width="2"/><path d="M941 674v-24l50-6M941 650l34 14v24" stroke="#b8761c" stroke-width="1.500"/>
          <path d="M991 644l12-2v68l34 14-62 8v-44" stroke="#c4a070" opacity=".6"/>
          <path d="M939 672v-54" stroke="#5a50e0" stroke-width="2"/><path d="M939 622v-30" stroke="#cdb27a"/>
          <path d="M939 612l3 12h-6z" fill="#9a90e0"/><ellipse cx="939" cy="627" rx="4" ry="3" fill="#1010ee"/>
          <path d="M939 582l4 13h-8z" fill="#c8860c"/><path d="M939 585v10" stroke="#ffd75a"/>
          <path d="M941 720l83-11" stroke="#86a446" stroke-width="1.500"/><path d="M1021 704l14 3-13 5z" fill="#8fc48a"/><path d="M1035 707l17-2" stroke="#cdb27a"/><path d="M1051 702l13 2-12 4z" fill="#b8a48a"/>
          <path d="M941 720l43 17" stroke="#d8704a" stroke-width="1.500"/><path d="M982 733l10 7-10 1z" fill="#f01010"/><path d="M992 740l9 4" stroke="#cdb27a"/><path d="M1000 741l9 6-10-1zM1012 743l2 4M1013 754l-2 4" fill="#a8761c" stroke="#b8761c" stroke-width="1.500"/>
        </g>
        <text x="933" y="573" class="axis" fill="#b06a10">Z</text>
      </svg>
      <div class="vtools">
        <button aria-label="Ukončit"><svg class="i20"><use href="#exit"/></svg></button>
        <button class="dd" aria-label="Výkres"><svg class="i20"><use href="#draw2d"/></svg><svg class="cv"><use href="#cv"/></svg></button>
        <button aria-label="Guma"><svg class="i20"><use href="#eraser"/></svg></button>
        <button aria-label="Rovina"><svg class="i20"><use href="#cubey"/></svg></button>
        <button class="dd" aria-label="Stínování"><svg class="i20"><use href="#cube"/></svg><svg class="cv"><use href="#cv"/></svg></button>
        <button class="dd" aria-label="Drátový"><svg class="i20"><use href="#cubew"/></svg><svg class="cv"><use href="#cv"/></svg></button>
        <button class="dd" aria-label="Pohledy"><svg class="i20"><use href="#cubec"/></svg><svg class="cv"><use href="#cv"/></svg></button>
        <button class="dd" aria-label="Lupa"><svg class="i20"><use href="#pagez"/></svg><svg class="cv"><use href="#cv"/></svg></button>
        <button class="dd" aria-label="Cíl"><svg class="i20"><use href="#target"/></svg><svg class="cv"><use href="#cv"/></svg></button>
        <button aria-label="Rozsah"><svg class="i20"><use href="#extents"/></svg></button>
        <button class="dd" aria-label="Kóty"><svg class="i20"><use href="#dimw"/></svg><svg class="cv"><use href="#cv"/></svg></button>
        <button class="dd" aria-label="Monitor"><svg class="i20"><use href="#monitor"/></svg><svg class="cv"><use href="#cv"/></svg></button>
        <button class="sw" aria-label="Barva čáry"><svg width="20" height="12"><rect width="20" height="12"/></svg></button>
        <button class="sw" aria-label="Barva plochy"><svg width="20" height="18"><rect x="1" y="1" width="18" height="16" fill="#bfe6f6" stroke="#111" stroke-width="2"/></svg></button>
        <button class="dd" aria-label="Hladiny"><svg class="i20"><use href="#layers"/></svg><svg class="cv"><use href="#cv"/></svg></button>
        <span class="combo layer"><svg class="i14"><use href="#lamp"/></svg><svg class="i14"><use href="#sun"/></svg><select aria-label="Hladina"><option>Hladina000</option></select></span>
      </div>
      <div class="hints"><p>&lt;pravý-klik&gt; pro kontextově-citlivé volby.</p><p>&lt;Shift-pravý-klik&gt; pro zobrazení filtru výběru.</p></div>
      <div class="ptm">PTM</div>
      <div class="minibar">
        <button aria-label="Historie"><svg class="i28"><use href="#tree"/></svg></button><button aria-label="Zpět"><svg class="i28"><use href="#undo"/></svg></button><button aria-label="Regenerovat"><svg class="i28"><use href="#regen"/></svg></button><button aria-label="Skica"><svg class="i28"><use href="#sketchr"/></svg></button><button aria-label="Vložit"><svg class="i28"><use href="#paste"/></svg></button><button aria-label="Ukončit"><svg class="i28"><use href="#exit"/></svg></button>
      </div>
      <ul class="ctx">
        <li><button><svg class="i20"><use href="#rot"/></svg><span>Nastavit střed rotace</span><kbd>Ctrl+1</kbd></button></li>
        <li><button class="sub"><span>Přiblížit vše</span></button></li>
        <li><button class="sub"><span>Vynechat entity</span></button></li>
        <li class="line"></li>
        <li><button class="sub"><span>Vložit základnu</span></button></li>
        <li><button><svg class="i20"><use href="#sketch"/></svg><span>Skica</span><kbd>Shift+S</kbd></button></li>
        <li><button><svg class="i20"><use href="#sk3d"/></svg><span>3D Skica</span></button></li>
        <li><button><svg class="i20"><use href="#conf"/></svg><span>Konfigurační tabulka</span></button></li>
        <li><button><svg class="i20"><use href="#curves"/></svg><span>Seznam křivek</span></button></li>
        <li><button><svg class="i20"><use href="#subp"/></svg><span>Vložit sub-díl</span></button></li>
        <li class="line"></li>
        <li><button class="hot"><svg class="i20"><use href="#mgr"/></svg><span>ZW3D Správce...</span></button></li>
        <li><button><svg class="i20"><use href="#pi"/></svg><span>Prohlížeč proměnných...</span></button></li>
        <li class="line"></li>
        <li><button><svg class="i20"><use href="#draw2d"/></svg><span>2D výkres</span></button></li>
        <li><button><span>Přizpůsobit menu</span></button></li>
      </ul>
      <svg class="triad" width="90" height="120" viewBox="80 795 90 120" aria-hidden="true">
        <path d="M87 881V826" stroke="#0808f0" stroke-width="2"/><path d="M86 817l4 13h-8z" fill="#3a3af8"/>
        <path d="M87 881l47-5" stroke="#20cc20" stroke-width="2"/><path d="M132 872l14 3-13 5z" fill="#128012"/>
        <path d="M87 881l24 10" stroke="#f01010" stroke-width="2"/><path d="M111 889l6 2 2 5-9-1z" fill="#f00808"/>
        <text x="81" y="815" class="axis" fill="#0808f0">Z</text><text x="148" y="879" class="axis" fill="#20d020">Y</text><text x="118" y="903" class="axis" fill="#f01010">X</text>
      </svg>
      <div class="scale">854.28mm</div>
    </div>
  </main>

  <aside class="dock">
    <div class="dockhead"><h2>Prohlížeč souborů</h2><button aria-label="Ukotvit"><svg width="14" height="12"><use href="#pin"/></svg></button><button aria-label="Zavřít panel"><svg width="14" height="12"><use href="#xw"/></svg></button></div>
    <div class="dockbody">
      <div class="panel">
        <div class="navbtns"><button disabled aria-label="Zpět"><svg class="i20"><use href="#bk"/></svg></button><button disabled aria-label="Vpřed"><svg class="i20"><use href="#fw"/></svg></button><button disabled aria-label="Nahoru"><svg class="i20"><use href="#up"/></svg></button><button aria-label="Obnovit"><svg width="22" height="20"><use href="#sync"/></svg></button></div>
        <ul class="ftree">
          <li><svg class="chev" viewBox="0 0 6 10"><path d="M1 1l4 4-4 4" fill="none" stroke="#888" stroke-width="1.500"/></svg><svg class="i18"><use href="#star"/></svg>Oblíbené</li>
          <li><svg class="chev" viewBox="0 0 6 10"><path d="M1 1l4 4-4 4" fill="none" stroke="#888" stroke-width="1.500"/></svg><svg class="i20"><use href="#folder"/></svg>(C:)</li>
          <li></li><li></li>
        </ul>
        <button class="acc a1"><svg width="10" height="12" viewBox="0 0 10 12"><path d="M1 0l9 6-9 6z" fill="#555"/></svg>Hledat</button>
        <button class="acc"><svg width="10" height="12" viewBox="0 0 10 12"><path d="M0 1h10L5 11z" fill="#555"/></svg>Seznam souborů</button>
        <div class="frow"><button class="viewbtn" aria-label="Zobrazení"><span><svg width="22" height="20"><use href="#grid"/></svg></span><svg class="cv"><path d="M0 2h8L4 6z"/></svg></button><span class="combo grow"><select aria-label="Typ souborů"><option>All Support Files</option></select></span></div>
        <div class="files"></div>
        <div class="orow"><label for="objs">Seznam objektů</label><span class="combo grow"><select id="objs"><option></option></select></span></div>
        <button class="acc a2"><svg width="10" height="12" viewBox="0 0 10 12"><path d="M1 0l9 6-9 6z" fill="#555"/></svg>Náhled</button>
      </div>
      <nav class="side">
        <button class="active" aria-label="Soubory"><svg class="i28"><use href="#sfold"/></svg></button><button aria-label="Knihovna"><svg class="i28"><use href="#sbolt"/></svg></button><button aria-label="Hladiny"><svg class="i28"><use href="#layers"/></svg></button><button aria-label="Vizuály"><svg class="i28"><use href="#sball"/></svg></button><button aria-label="Barvy"><svg class="i28"><use href="#scol"/></svg></button>
      </nav>
    </div>
    <div class="dockhead outhead"><h2>Výstup</h2><button aria-label="Stop"><svg width="10" height="10"><rect width="10" height="10" fill="#222"/></svg></button><button aria-label="Ukotvit výstup"><svg width="14" height="12"><use href="#pin"/></svg></button><button aria-label="Zavřít výstup"><svg width="14" height="12"><use href="#xw"/></svg></button></div>
    <div class="output">
      <div class="log"><p class="g">importováno.</p><p>[Cover X9-14.SLDPRT] otevřený za 8.1820 sekundy.</p><p>Pracování...</p><p class="g">POZNÁMKA: [Cover X9-14.Z3PRT] záložní soubor byl úspěšně vytvořen.</p></div>
      <div class="sbar"><svg width="9" height="5" viewBox="0 0 9 5"><path d="M0 5h9L4.500 0z" fill="#444"/></svg><div class="thumb"></div><svg width="9" height="5" viewBox="0 0 9 5"><path d="M0 0h9L4.500 5z" fill="#444"/></svg></div>
    </div>
  </aside>
</div>

<footer class="status">
  <span class="msg">Vybrat příkaz nebo entitu.</span>
  <div class="stbtns"><button aria-label="Správce"><svg class="i18"><use href="#wint"/></svg></button><button class="on" aria-label="Displej"><svg class="i18"><use href="#disp"/></svg></button><button class="on" aria-label="Okno výstupu"><svg class="i18"><use href="#winm"/></svg></button></div>
  <div class="cmd"></div>
</footer>
</body>
</html>
```
FILE: styles.css
```css
* { box-sizing: border-box; }
html, body { height: 100%; }
body {
  margin: 0;
  display: flex;
  flex-direction: column;
  overflow: hidden;
  background: #e1e5e8;
  color: #1b1b1b;
  font: 14px/20px "Open Sans", "Noto Sans", sans-serif;
}
button, select, input { font: inherit; color: inherit; }
button { background: none; border: 0; padding: 0; white-space: nowrap; }
a { color: inherit; text-decoration: none; white-space: nowrap; }
h2, h3, p, ul { margin: 0; padding: 0; font-weight: normal; font-size: inherit; }
ul { list-style: none; }
svg { flex: none; }
.sprite { position: absolute; width: 0; height: 0; }
.i14 { width: 14px; height: 18px; }
.i18 { width: 18px; height: 18px; }
.i20 { width: 20px; height: 20px; }
.i28 { width: 28px; height: 28px; overflow: visible; }
.cv { width: 8px; height: 8px; }

/* title bar */
.titlebar { display: flex; align-items: center; height: 32px; flex: none; padding-left: 3px; }
.logo { margin-right: 2px; }
.quick { display: flex; border-left: 1px solid #9a9da1; height: 12px; align-items: center; padding-left: 7px; }
.quick button { width: 28px; height: 28px; display: grid; place-items: center; }
.quick .narrow { width: 19px; }
.mainmenu { display: flex; gap: 18px; margin-left: 10px; color: #111; }
.apptitle { margin-left: auto; color: #333; white-space: nowrap; }
.winbtns { display: flex; gap: 16px; align-items: center; margin-left: 224px; padding-right: 4px; }
.winbtns button { display: grid; }

/* ribbon tabs */
.tabs { display: flex; gap: 1px; height: 28px; flex: none; border-bottom: 1px solid #b7bcc6; }
.tab { padding: 0 12px; color: #444; height: 28px; line-height: 28px; }
.tab.file { width: 90px; margin-right: 1px; background: #2a62b8; border: 1px solid #3a7ad6; color: #fff; line-height: 26px; }
.tab.active { background: #fcfcfc; border: 1px solid #b7bcc6; border-bottom: 0; color: #555; line-height: 26px; }
.tabtools { margin-left: auto; display: flex; align-items: center; gap: 10px; height: 26px; padding-right: 1px; }
.tabtools button { display: flex; align-items: center; gap: 6px; }
.tabtools .fold { margin-right: 5px; }
.tabtools .opts { margin-right: 4px; }
.search { display: flex; align-items: center; width: 180px; height: 26px; background: #fff; border: 1px solid #b7bcc6; padding-right: 8px; }
.search input { flex: 1; min-width: 0; border: 0; padding: 0 2px; background: none; outline: 0; }
.search input::placeholder { color: #8a8a8a; opacity: 1; }

/* ribbon */
.ribbon { display: flex; height: 119px; flex: none; background: #fcfcfc; border-bottom: 1px solid #b7bcc6; padding: 5px 0 3px; }
.group { display: flex; flex-direction: column; border-right: 1px solid #d3d6da; }
.cols { display: flex; height: 87px; }
.col { display: flex; flex-direction: column; flex: none; }
.col button { display: flex; align-items: center; gap: 4px; height: 29px; }
.col .cv { margin-left: 4px; }
.group h3 { text-align: center; color: #767b82; padding: 2px 0; white-space: nowrap; }
.g1 { width: 164px; } .g1 .cols { padding-left: 11px; }
.g2 { width: 304px; } .g2 .cols { padding-left: 8px; }
.g3 { width: 163px; } .g3 .cols { padding-left: 8px; }
.g4 { width: 115px; } .g4 .cols { padding-left: 8px; }
.g5 { width: 233px; } .g5 .cols { padding-left: 8px; }
.g6 { width: 505px; } .g6 .cols { padding-left: 8px; }
.g7 { width: 67px; } .g7 .cols { padding-left: 8px; }
.g8 { width: 83px; } .g8 .cols { padding-left: 9px; }
.c28 { width: 28px; } .c44 { width: 44px; } .c94 { width: 94px; } .c100 { width: 100px; } .c152 { width: 152px; } .c180 { width: 180px; }

/* selection toolbar */
.toolbar { display: flex; align-items: center; height: 34px; flex: none; padding: 2px 0 0 2px; }
.toolbar button, .vtools button { width: 28px; height: 26px; display: flex; align-items: center; justify-content: center; flex: none; }
.toolbar .dd { width: 42px; gap: 5px; }
.grip { width: 2px; height: 18px; margin-right: 6px; background: repeating-linear-gradient(#8b93a3 0 2px, transparent 2px 4px); }
.on { background: #fde67c; border: 1px solid #c99a3c !important; }
.sep { width: 1px; height: 20px; background: #b7bcc6; margin: 0 3px; }
.combo { position: relative; display: flex; align-items: center; width: 166px; height: 26px; background: #fff; border: 1px solid #b0b6c0; margin-left: 2px; flex: none; }
.combo::after { content: ""; position: absolute; right: 7px; top: 9px; border: 3px solid transparent; border-top: 5px solid #444; border-bottom: 0; }
.combo select { appearance: none; border: 0; background: none; padding: 0 3px; width: 100%; height: 100%; outline: 0; color: #111; opacity: 1; }
.combo.off { background: #ececee; border-color: #e6e8ea; }
.combo.off select { color: #8c8c8c; }
.combo.off::after { border-top-color: #b5b5b5; }
.combo.grow { flex: 1; width: auto; margin: 0; height: 32px; }
.combo.grow::after { top: 12px; }

/* documents */
.work { display: flex; flex: 1; min-height: 0; }
.docs { flex: 1; min-width: 0; display: flex; flex-direction: column; border-right: 1px solid #b7bcc6; }
.doctabs { display: flex; height: 27px; flex: none; border-bottom: 1px solid #b7bcc6; color: #111; }
.doctab { display: flex; align-items: center; gap: 7px; height: 27px; }
.doctab.active { background: #fefefe; border: 1px solid #b7bcc6; border-bottom: 0; width: 213px; padding-left: 38px; }
.t1 { padding-left: 39px; width: 190px; }
.t2 { width: 125px; }
.t4 { padding-left: 40px; width: 183px; }
.dx { height: 20px; display: grid; place-items: center; border-bottom: 1px solid #f0d9ae; }
.active .dx { border-bottom-color: transparent; }
.list { margin-left: auto; margin-right: 6px; }
.add { display: grid; place-items: center; }

.viewport { position: relative; flex: 1; min-height: 0; background: linear-gradient(#fefefe, #9e9e9e); border-bottom: 1px solid #b7bcc6; overflow: hidden; }
.model { position: absolute; inset: 0; width: 100%; height: 100%; }
.axis { font-size: 20px; font-family: "Open Sans", sans-serif; }
.vtools { position: relative; display: flex; align-items: center; justify-content: center; padding-top: 2px; }
.vtools .dd { width: 44px; gap: 5px; padding-right: 3px; }
.vtools .sw { width: 30px; }
.layer { width: 144px; gap: 5px; padding-left: 8px; margin: 0; }
.layer select { flex: 1; width: auto; min-width: 0; padding: 0; }
.hints { position: absolute; left: 21px; top: 25px; line-height: 26px; color: #111; }
.ptm { position: absolute; left: 170px; top: 134px; font-size: 18px; font-weight: bold; color: #f01a24; }
.minibar { position: absolute; left: 156px; top: 156px; display: flex; gap: 5px; height: 34px; width: 199px; padding: 3px; background: #fdfdfd; }
.minibar button { display: grid; }
.ctx { position: absolute; left: 156px; top: 194px; width: 281px; padding: 2px 0 0; border: 1px solid #f4f4f4; border-width: 0 1px; background: linear-gradient(90deg, #fff 31px, #e2e3e3 31px 32px, #fff 32px); box-shadow: 3px 3px 3px rgba(0,0,0,.6); color: #53575c; }
.ctx button { position: relative; display: flex; align-items: center; width: 100%; height: 28px; padding-left: 36px; text-align: left; }
.ctx svg { position: absolute; left: 5px; top: 4px; }
.ctx span { width: 179px; }
.ctx kbd { font: inherit; }
.ctx .sub::after { content: ""; position: absolute; left: 266px; border: 5px solid transparent; border-left: 6px solid #777; border-right: 0; }
.ctx .line { height: 9px; padding: 2px 5px 0 32px; }
.ctx .line::before { content: ""; display: block; height: 1px; background: #999; }
.ctx .hot { background: #feefb9; outline: 5px solid #ee1c25; z-index: 1; width: 277px; height: 26px; margin-bottom: 2px; }
.triad { position: absolute; left: 80px; bottom: 70px; }
.scale { position: absolute; left: 4px; bottom: 0; font-size: 20px; line-height: 24px; color: #111; }

/* right dock */
.dock { width: 410px; flex: none; display: flex; flex-direction: column; padding-left: 3px; }
.dockhead { display: flex; align-items: center; gap: 10px; height: 26px; flex: none; padding: 2px 3px 0 4px; color: #444; }
.dockhead h2 { flex: 1; }
.dockhead button { display: grid; }
.dockbody { display: flex; flex: 1; min-height: 0; border-top: 1px solid #b7bcc6; }
.panel { flex: 1; display: flex; flex-direction: column; border: 1px solid #b7bcc6; border-top: 0; background: #dde1e9; padding: 1px 1px 0 0; }
.navbtns { display: flex; gap: 4px; background: #e1e5e8; padding-bottom: 3px; }
.navbtns button { width: 35px; height: 31px; display: grid; place-items: center; background: #fcfcfc; border: 1px solid #b7bcc6; }
.navbtns button:disabled { background: #eeefef; border-color: #cfd2d6; }
.ftree { height: 88px; background: repeating-linear-gradient(#fff 0 23px, #f5f5f5 23px 46px); border: 1px solid #b0b6c0; }
.ftree li { display: flex; align-items: center; gap: 4px; height: 23px; padding-left: 6px; }
.chev { width: 6px; height: 10px; margin-right: 6px; }
.acc { display: flex; align-items: center; gap: 6px; height: 30px; padding-left: 5px; background: #fcfcfc; border: 1px solid #b0b6c0; font-weight: bold; color: #333; }
.a1 { margin: 9px 0 2px; }
.acc.a2 { margin: 2px 0 40px; }
.frow { display: flex; gap: 3px; padding: 3px; height: 39px; border: 1px solid #b7bcc6; border-top: 0; }
.viewbtn { display: flex; align-items: center; width: 50px; height: 31px; border: 1px solid #b0b6c0; gap: 1px; }
.viewbtn span { display: grid; place-items: center; width: 38px; height: 29px; background: #fcfcfc; }
.files { flex: 1; min-height: 40px; background: #fff; border: 1px solid #b7bcc6; border-top: 0; }
.orow { display: flex; align-items: center; gap: 4px; height: 37px; padding: 2px 2px 2px 1px; border: 1px solid #b7bcc6; border-top: 0; color: #333; }
.side { width: 31px; flex: none; }
.side button { display: flex; align-items: center; width: 100%; height: 60px; padding-left: 3px; overflow: hidden; }
.side .active { height: 58px; background: #fdfdfd; border-bottom: 1px solid #b7bcc6; }
.outhead { height: 28px; }
.output { display: flex; height: 103px; flex: none; margin-bottom: 1px; border: 1px solid #b7bcc6; border-right: 0; background: #fff; overflow: hidden; color: #111; }
.log { flex: 1; padding: 0 30px 0 4px; margin-top: -2px; }
.g { color: #0c7a0c; }
.sbar { width: 16px; background: #dde1e9; display: flex; flex-direction: column; align-items: center; padding: 8px 0; }
.thumb { width: 16px; height: 24px; margin-top: auto; margin-bottom: 8px; border: 1px solid #8a90a0; background: repeating-linear-gradient(#888 0 1px, transparent 1px 3px) center / 8px 9px no-repeat #f4f5f8; }

/* status */
.status { display: flex; height: 26px; flex: none; overflow: hidden; border-top: 1px solid #c4c8d0; }
.msg { padding: 9px 0 0 4px; line-height: 16px; flex: 1; white-space: nowrap; color: #444; }
.stbtns { display: flex; gap: 10px; padding: 4px 10px 0 15px; border-left: 1px solid #888; }
.stbtns button { width: 25px; height: 26px; display: flex; justify-content: center; padding-top: 2px; }
.cmd { width: 433px; margin-top: 3px; background: #fff; border: 1px solid #b7bcc6; }
```
